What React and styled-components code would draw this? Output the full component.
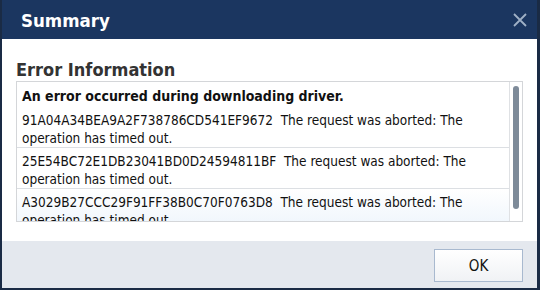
import styled, { createGlobalStyle } from 'styled-components';

const GlobalStyle = createGlobalStyle`
  html, body {
    margin: 0;
    padding: 0;
    background: #1a2b45;
  }
  * {
    box-sizing: border-box;
  }
`;

const errors = [
  { id: '91A04A34BEA9A2F738786CD541EF9672', msg: 'The request was aborted: The operation has timed out.' },
  { id: '25E54BC72E1DB23041BD0D24594811BF', msg: 'The request was aborted: The operation has timed out.' },
  { id: 'A3029B27CCC29F91FF38B0C70F0763D8', msg: 'The request was aborted: The operation has timed out.' },
];

function App() {
  return (
    <>
      <GlobalStyle />
      <Window>
        <TitleBar>
          <Title>Summary</Title>
          <CloseButton aria-label='close'>
            <svg width='14' height='14' viewBox='0 0 14 14'>
              <path d='M1 1 L13 13 M13 1 L1 13' stroke='#9fb0c6' strokeWidth='1.8' fill='none' />
            </svg>
          </CloseButton>
        </TitleBar>
        <Body>
          <Heading>Error Information</Heading>
          <ListBox>
            <Rows>
              <HeaderRow>An error occurred during downloading driver.</HeaderRow>
              {errors.map((e, i) => (
                <Row key={e.id} last={i === errors.length - 1}>
                  {e.id}&nbsp;&nbsp;{e.msg}
                </Row>
              ))}
            </Rows>
            <ScrollTrack>
              <Thumb />
            </ScrollTrack>
          </ListBox>
        </Body>
        <Footer>
          <OkButton>OK</OkButton>
        </Footer>
      </Window>
    </>
  );
}

const Window = styled.div`
  width: 540px;
  height: 290px;
  display: flex;
  flex-direction: column;
  border: 2px solid #1a2b45;
  border-top: none;
  border-right-width: 3px;
  background: #fff;
  font-family: 'DejaVu Sans Condensed', 'Noto Sans', sans-serif;
  color: #111;
  overflow: hidden;
`;

const TitleBar = styled.div`
  height: 39px;
  flex: none;
  background: #1b3660;
  display: flex;
  align-items: center;
  justify-content: space-between;
  margin: 0 -3px 0 -2px;
  padding: 1px 12px 0 21px;
`;

const Title = styled.h1`
  margin: 0;
  font-size: 18.5px;
  font-weight: bold;
  color: #fff;
`;

const CloseButton = styled.div`
  width: 16px;
  height: 16px;
  display: flex;
  align-items: center;
  justify-content: center;
`;

const Body = styled.div`
  flex: 1;
  padding: 20px 14px 0 14px;
  background: #fff;
`;

const Heading = styled.h2`
  margin: 0;
  font-size: 18px;
  line-height: 22px;
  font-weight: bold;
  color: #333;
`;

const ListBox = styled.div`
  height: 141px;
  border: 1px solid #d4d6d9;
  display: flex;
  overflow: hidden;
`;

const Rows = styled.div`
  flex: 1;
  overflow: hidden;
`;

const HeaderRow = styled.div`
  padding: 5px 5px 2px;
  font-size: 14px;
  line-height: 18px;
  font-weight: bold;
`;

const Row = styled.div`
  padding: 4px 5px 0;
  font-size: 13.5px;
  line-height: 18px;
  border-bottom: ${(p) => (p.last ? 'none' : '1px solid #dcdfe3')};
  background: ${(p) => (p.last ? 'linear-gradient(#ffffff, #eef5fc)' : '#fff')};
`;

const ScrollTrack = styled.div`
  width: 13px;
  flex: none;
  border-left: 1px solid #dfe1e4;
  padding: 4px 3px;
`;

const Thumb = styled.div`
  width: 6px;
  height: 123px;
  border-radius: 3px;
  background: #7e8b99;
`;

const Footer = styled.div`
  height: 47px;
  flex: none;
  background: #e4e8ee;
  display: flex;
  align-items: flex-start;
  justify-content: flex-end;
  padding: 8px 14px 0 0;
`;

const OkButton = styled.button`
  width: 89px;
  height: 33px;
  border: 1px solid #a8b9cf;
  background: linear-gradient(#ffffff, #f0f2f5);
  font-family: inherit;
  font-size: 15px;
  color: #111;
  cursor: pointer;
`;

export default App;
